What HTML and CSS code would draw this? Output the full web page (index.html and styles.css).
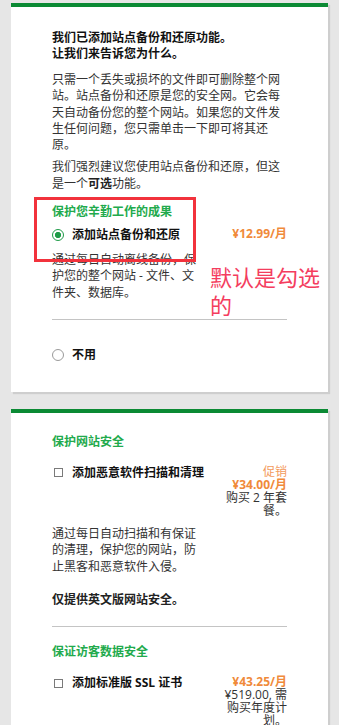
FILE: index.html
```html
<!DOCTYPE html>
<html lang="zh-CN">
<head>
  <meta charset="UTF-8">
  <meta name="viewport" content="width=device-width, initial-scale=1.0">
  <title>站点附加服务</title>
  <link rel="stylesheet" href="styles.css">
</head>
<body>
  <div class="page">
    <section class="card card--backup">
      <h2 class="card-title">我们已添加站点备份和还原功能。<br>让我们来告诉您为什么。</h2>
      <p class="text">只需一个丢失或损坏的文件即可删除整个网站。站点备份和还原是您的安全网。它会每天自动备份您的整个网站。如果您的文件发生任何问题，您只需单击一下即可将其还原。</p>
      <p class="text text--next">我们强烈建议您使用站点备份和还原，但这是一个<strong>可选</strong>功能。</p>

      <h3 class="section-title">保护您辛勤工作的成果</h3>
      <div class="option option--radio">
        <label class="option-label"><span class="radio is-checked"></span>添加站点备份和还原</label>
        <div class="option-price"><b>¥12.99/月</b></div>
      </div>
      <p class="option-desc">通过每日自动离线备份，保护您的整个网站 - 文件、文件夹、数据库。</p>

      <hr class="divider">

      <div class="option option--none">
        <label class="option-label"><span class="radio"></span>不用</label>
      </div>

      <!-- annotation -->
      <div class="mark-box"></div>
      <div class="mark-note">默认是勾选的</div>
    </section>

    <section class="card">
      <h3 class="section-title">保护网站安全</h3>
      <div class="option">
        <label class="option-label"><span class="checkbox"></span>添加恶意软件扫描和清理</label>
        <div class="option-price">
          <span class="promo">促销</span><br>
          <b>¥34.00/月</b><br>
          购买 2 年套餐。
        </div>
      </div>
      <p class="option-desc">通过每日自动扫描和有保证的清理，保护您的网站，防止黑客和恶意软件入侵。</p>
      <p class="option-note">仅提供英文版网站安全。</p>

      <hr class="divider">

      <h3 class="section-title">保证访客数据安全</h3>
      <div class="option">
        <label class="option-label"><span class="checkbox"></span>添加标准版 SSL 证书</label>
        <div class="option-price">
          <b>¥43.25/月</b><br>
          ¥519.00, 需购买年度计划。
        </div>
      </div>
    </section>
  </div>
</body>
</html>
```

FILE: styles.css
```css
body {
  font-family: "Open Sans", "Noto Sans CJK SC", sans-serif;
  font-size: 12px;
  margin: 0;
  padding: 3px 11px 0;
  background-color: #e6e6e6;
  color: #333;
}
.card {
  position: relative;
  background-color: #fff;
  border-top: 4px solid #0b8a34;
  box-shadow: 2px 2px 1px rgba(0, 0, 0, 0.1);
  padding: 21px 41px 29px;
  margin-bottom: 17px;
}
.card-title {
  margin: 2px 0 0;
  font-size: 12px;
  line-height: 16px;
  font-weight: bold;
  color: #111;
}
.text {
  margin: 10px 0 0;
  line-height: 16.3px;
}
.text--next {
  margin-top: 6px;
}
.text strong {
  color: #222;
}
.section-title {
  margin: 12px 0 0;
  font-size: 12px;
  line-height: 16px;
  font-weight: bold;
  color: #22aa4c;
}
.section-title:first-child {
  margin-top: 0;
}
.divider + .section-title {
  margin-top: 17px;
}
.option {
  display: flex;
  justify-content: space-between;
  align-items: flex-start;
  margin-top: 15px;
}
.option--radio {
  margin-top: 7px;
}
.option--none {
  margin-top: 27px;
}
.option-label {
  display: flex;
  align-items: center;
  line-height: 16px;
  font-weight: bold;
  color: #111;
}
.radio {
  flex: none;
  box-sizing: border-box;
  width: 12px;
  height: 12px;
  margin-right: 8px;
  border: 1px solid #9a9a9a;
  border-radius: 50%;
}
.radio.is-checked {
  border: 1.5px solid #1f9b48;
  background: radial-gradient(circle, #1f9b48 0 2.8px, #fff 3.4px);
}
.checkbox {
  flex: none;
  box-sizing: border-box;
  width: 9px;
  height: 9px;
  margin: 0 9.5px 0 1.5px;
  border: 1px solid #7a7a7a;
}
.option-price {
  flex: none;
  width: 64px;
  text-align: right;
  line-height: 13px;
  color: #333;
}
.option-price b {
  color: #f08a3a;
}
.promo {
  color: #f39a5c;
}
.option-desc {
  max-width: 146px;
  margin: 9px 0 0;
  line-height: 16.3px;
}
.option-note {
  margin: 17.5px 0 0;
  line-height: 16px;
  font-weight: bold;
  color: #222;
}
.divider {
  margin: 18px 0 0;
  border: 0;
  border-top: 1px solid #c4c4c4;
}
.mark-box {
  position: absolute;
  left: 23px;
  top: 190px;
  box-sizing: border-box;
  width: 162px;
  height: 65px;
  border: 3px solid #f2323c;
}
.mark-note {
  position: absolute;
  left: 199px;
  top: 255px;
  width: 116px;
  font-family: "Noto Sans CJK SC", sans-serif;
  font-size: 22px;
  line-height: 28px;
  color: #f43d5e;
}
```
